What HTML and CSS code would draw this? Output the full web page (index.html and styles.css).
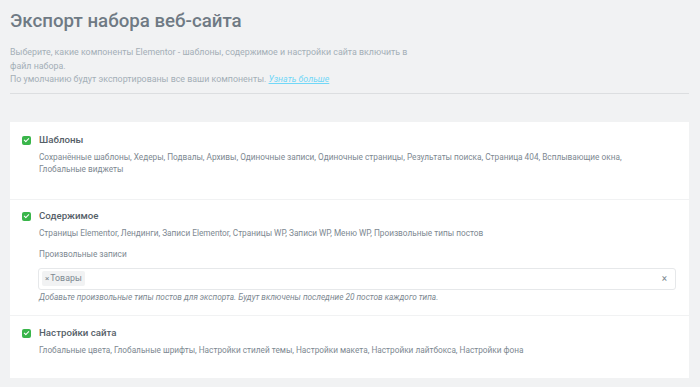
FILE: index.html
```html
<!DOCTYPE html>
<html lang="ru">
<head>
  <meta charset="UTF-8" />
  <meta name="viewport" content="width=device-width, initial-scale=1" />
  <title>Экспорт набора веб-сайта</title>
  <link rel="stylesheet" href="styles.css">
</head>
<body>

<div class="page">
  <div class="intro">
    <h1>Экспорт набора веб-сайта</h1>
    <p>Выберите, какие компоненты Elementor - шаблоны, содержимое и настройки сайта включить в<br>файл набора.<br>По умолчанию будут экспортированы все ваши компоненты. <a href="#">Узнать больше</a></p>
  </div>

  <div class="card">
    <div class="section">
      <span class="check"></span>
      <div class="body">
        <h3>Шаблоны</h3>
        <p>Сохранённые шаблоны, Хедеры, Подвалы, Архивы, Одиночные записи, Одиночные страницы, Результаты поиска, Страница 404, Всплывающие окна, Глобальные виджеты</p>
      </div>
    </div>

    <div class="section">
      <span class="check"></span>
      <div class="body">
        <h3>Содержимое</h3>
        <p>Страницы Elementor, Лендинги, Записи Elementor, Страницы WP, Записи WP, Меню WP, Произвольные типы постов</p>
        <div class="label">Произвольные записи</div>
        <div class="select">
          <span class="tag"><span class="x">×</span>Товары</span>
          <span class="clear">×</span>
        </div>
        <div class="hint">Добавьте произвольные типы постов для экспорта. Будут включены последние 20 постов каждого типа.</div>
      </div>
    </div>

    <div class="section">
      <span class="check"></span>
      <div class="body">
        <h3>Настройки сайта</h3>
        <p>Глобальные цвета, Глобальные шрифты, Настройки стилей темы, Настройки макета, Настройки лайтбокса, Настройки фона</p>
      </div>
    </div>
  </div>
</div>

</body>
</html>
```

FILE: styles.css
```css
body {
  font-family: Roboto, sans-serif;
  background-color: #f1f2f3;
  margin: 0;
  color: #6d7882;
}

.page {
  padding: 9px 11px 9px 10px;
}

.intro {
  border-bottom: 1px solid #dcdee0;
  padding-bottom: 6px;
}

h1 {
  font-size: 18.7px;
  font-weight: 500;
  line-height: 24px;
  margin: 0 0 13px;
  color: #6f7a84;
}

.intro p {
  font-size: 8.85px;
  line-height: 13.5px;
  margin: 0;
  color: #a4afb7;
}

.intro a {
  color: #71d7f7;
  font-style: italic;
}

.card {
  background: #fff;
  margin-top: 28px;
}

.section {
  display: flex;
  gap: 8px;
  padding: 12px 13px 24px 12px;
  border-bottom: 1px solid #f1f2f3;
}

.section:nth-child(2) {
  padding-top: 10px;
  padding-bottom: 12px;
}

.section:last-child {
  border-bottom: none;
  padding-top: 11px;
  padding-bottom: 22px;
}

.check {
  flex: none;
  width: 9px;
  height: 9px;
  margin-top: 2px;
  border-radius: 2px;
  background: #39b54a;
  position: relative;
}

.check::after {
  content: "";
  position: absolute;
  left: 3px;
  top: 1.5px;
  width: 2px;
  height: 4px;
  border: solid #fff;
  border-width: 0 1px 1px 0;
  transform: rotate(45deg);
}

.body {
  flex: 1;
}

h3 {
  font-size: 9.7px;
  font-weight: 500;
  line-height: 12px;
  margin: 0 0 5px;
  color: #556068;
}

.body p {
  font-size: 8.25px;
  line-height: 12px;
  margin: 0;
  max-width: 600px;
  color: #7d8891;
}

.label {
  font-size: 8.25px;
  line-height: 12px;
  color: #7d8891;
  margin: 9px 0 8px;
}

.select {
  display: flex;
  align-items: center;
  justify-content: space-between;
  height: 20px;
  border: 1px solid #e6e8ea;
  border-radius: 3px;
  padding: 0 8px 0 3px;
  margin-left: -1px;
}

.tag {
  font-size: 8.8px;
  line-height: 11px;
  color: #7d8891;
  background: #f1f2f3;
  border-radius: 2px;
  padding: 2px 3px;
}

.tag .x {
  font-size: 8px;
  margin-right: 1px;
}

.clear {
  font-size: 10px;
  color: #7d8891;
}

.hint {
  font-size: 8.25px;
  line-height: 12px;
  font-style: italic;
  color: #7d8891;
  margin-top: 1px;
}
```
